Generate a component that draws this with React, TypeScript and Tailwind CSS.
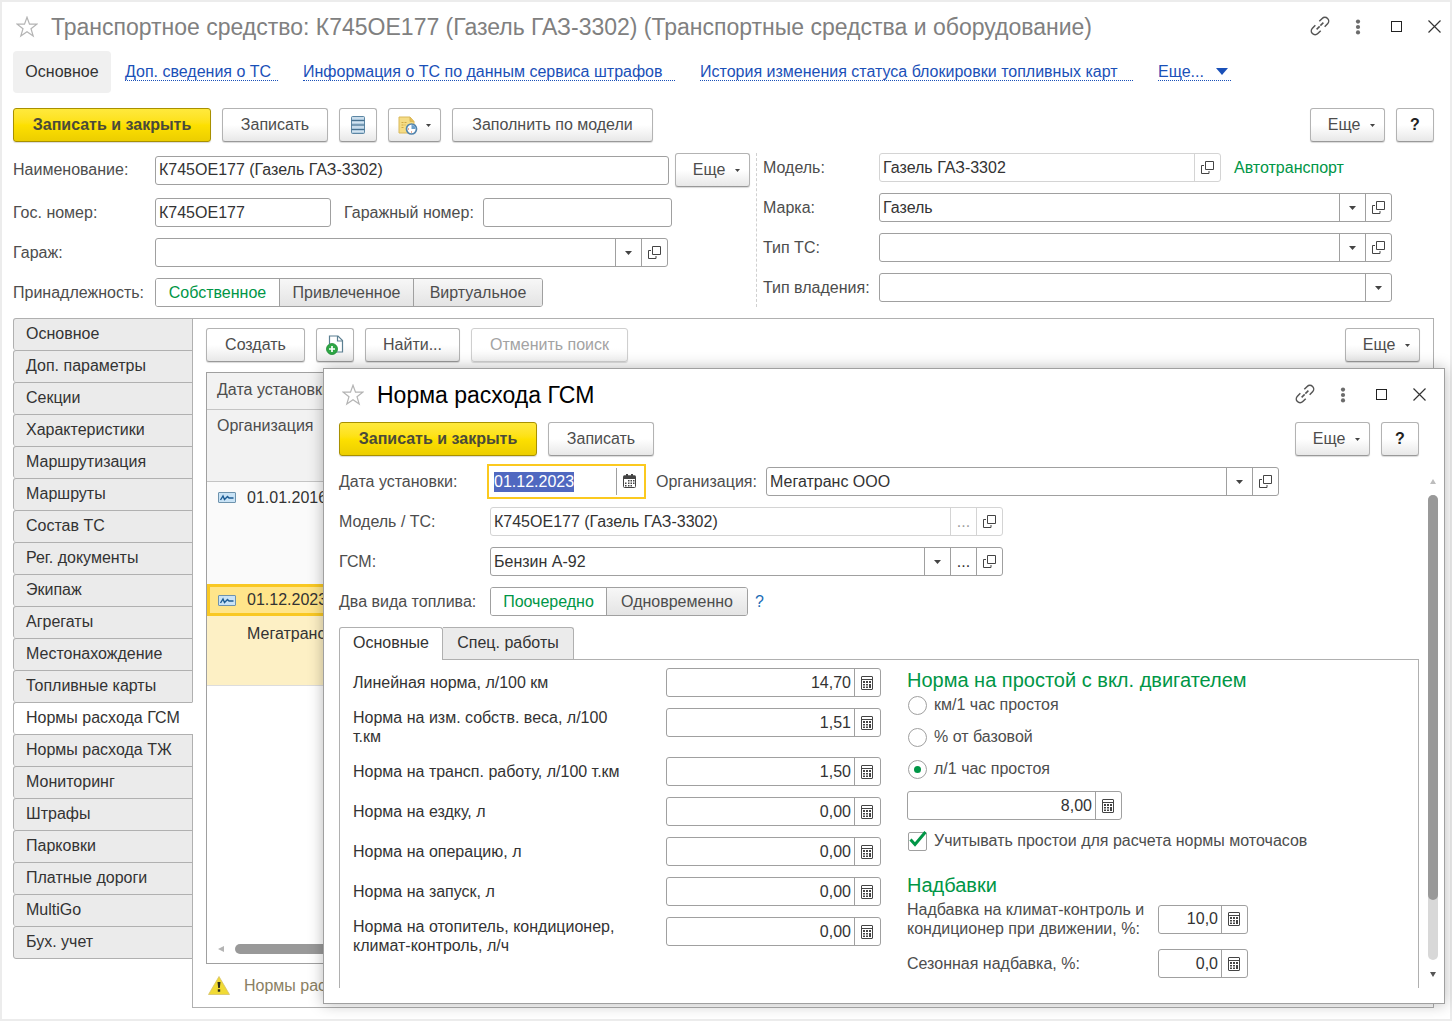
import React from "react";

const sections = [
  "Основное",
  "Доп. параметры",
  "Секции",
  "Характеристики",
  "Маршрутизация",
  "Маршруты",
  "Состав ТС",
  "Рег. документы",
  "Экипаж",
  "Агрегаты",
  "Местонахождение",
  "Топливные карты",
  "Нормы расхода ГСМ",
  "Нормы расхода ТЖ",
  "Мониторинг",
  "Штрафы",
  "Парковки",
  "Платные дороги",
  "MultiGo",
  "Бух. учет",
];

const links = [
  { text: "Доп. сведения о ТС", width: "min-w-[153px]" },
  { text: "Информация о ТС по данным сервиса штрафов", width: "min-w-[372px]" },
  { text: "История изменения статуса блокировки топливных карт", width: "min-w-[433px]" },
];

const norms = [
  { id: "linear", label: "Линейная норма, л/100 км", value: "14,70" },
  { id: "weight", label: "Норма на изм. собств. веса, л/100 т.км", value: "1,51" },
  { id: "transport", label: "Норма на трансп. работу, л/100 т.км", value: "1,50" },
  { id: "trip", label: "Норма на ездку, л", value: "0,00" },
  { id: "operation", label: "Норма на операцию, л", value: "0,00" },
  { id: "start", label: "Норма на запуск, л", value: "0,00" },
  { id: "heater", label: "Норма на отопитель, кондиционер, климат-контроль, л/ч", value: "0,00" },
];

/* ---------- icons ---------- */

const StarIcon = () => (
  <svg width="22" height="22" viewBox="0 0 22 22" fill="none" stroke="#b4b4b4" strokeWidth="1.2">
    <path d="M11 1.2l2.5 7h7.3l-5.8 4.5 2.2 7.4-6.2-4.4-6.2 4.4 2.2-7.4-5.8-4.5h7.3z" />
  </svg>
);

const LinkIcon = () => (
  <svg className="shrink-0" width="24" height="24" viewBox="0 0 24 24" fill="none" stroke="#555" strokeWidth="1.5">
    <g transform="rotate(-45 12 11)">
      <path d="M14.8 7.200h4.100a3.800 3.800 0 0 1 0 7.600h-4.100" />
      <path d="M9.200 7.200H5.100a3.800 3.800 0 0 0 0 7.600h4.100" />
      <path d="M7.200 11h4.300M12.500 11h4.300" />
    </g>
  </svg>
);

const DotsIcon = () => (
  <svg width="6" height="16" viewBox="0 0 6 16" fill="#6b6b6b">
    <circle cx="3" cy="2.6" r="2.1" />
    <circle cx="3" cy="8" r="2.1" />
    <circle cx="3" cy="13.4" r="2.1" />
  </svg>
);

const SquareIcon = () => (
  <svg width="11" height="11" viewBox="0 0 11 11" fill="none" stroke="#222">
    <rect x="0.5" y="0.5" width="10" height="10" />
  </svg>
);

const CloseIcon = () => (
  <svg width="13" height="13" viewBox="0 0 13 13" fill="none" stroke="#333" strokeWidth="1.2">
    <path d="M0.5 0.5l12 12M12.5 0.5l-12 12" />
  </svg>
);

const CaretIcon = () => (
  <svg width="7" height="4" viewBox="0 0 7 4" fill="#444">
    <path d="M0 0h7L3.5 4z" />
  </svg>
);

const OpenIcon = () => (
  <svg width="13" height="13" viewBox="0 0 13 13" fill="none" stroke="#444">
    <path d="M4.500 0.500h8v8h-8zM3 4.500H0.500v8h7.500V10" />
  </svg>
);

const CalcIcon = () => (
  <svg width="12" height="14" viewBox="0 0 12 14">
    <rect x="0.5" y="0.5" width="11" height="13" rx="0.5" fill="none" stroke="#444" />
    <path d="M1 3.500h10" stroke="#444" />
    <path
      d="M2 5h2v2H2zM5 5h2v2H5zM8 5h2v2H8zM2 8h2v1.500H2zM5 8h2v1.500H5zM8 8h2v4H8zM2 10.500h2V12H2zM5 10.500h2V12H5z"
      fill="#444"
    />
  </svg>
);

const CalendarIcon = () => (
  <svg width="13" height="14" viewBox="0 0 13 14">
    <rect x="0.5" y="2" width="12" height="11.500" rx="1" fill="none" stroke="#444" />
    <path d="M0.500 1.500h12V5h-12zM3 0h2v2H3zM8 0h2v2H8z" fill="#444" />
    <path
      d="M5 6h1.500v1.500H5zM7.500 6H9v1.500H7.500zM10 6h1.500v1.500H10zM2 8.500h1.500V10H2zM5 8.500h1.500V10H5zM7.500 8.500H9V10H7.500zM10 8.500h1.500V10H10zM2 11h1.500v1.500H2zM5 11h1.500v1.500H5zM7.500 11H9v1.500H7.500z"
      fill="#444"
    />
  </svg>
);

const ListIcon = () => (
  <svg width="14" height="18" viewBox="0 0 14 18">
    <rect x="0.5" y="0.5" width="13" height="17" rx="1" fill="#a9c6dc" stroke="#5c86a3" />
    <path d="M1 2h12M1 6.500h12M1 11h12M1 15.500h12" stroke="#d3e4f0" strokeWidth="1.500" />
    <path d="M0.500 4.500h13M0.500 9h13M0.500 13.500h13" stroke="#47708e" />
  </svg>
);

const ReportIcon = () => (
  <svg className="shrink-0" width="20" height="19" viewBox="0 0 20 19" fill="none">
    <path d="M1 1h11l4 4.500V17H1z" fill="#f5dc85" stroke="#d9b85a" />
    <path d="M12 1v4.500h4" fill="#e3bd55" stroke="#d9b85a" />
    <path d="M3.500 6.500h5M3.500 9h4M3.500 11.500h3" stroke="#cfa944" strokeDasharray="2 1" />
    <circle cx="13.500" cy="13" r="5" fill="#fff" stroke="#5284ad" strokeWidth="1.700" />
    <path d="M13.500 13V9a4 4 0 0 1 4 4z" fill="#6aa0cc" />
    <path d="M13.500 15.500v1M10 13h1" stroke="#d0552a" />
  </svg>
);

const NewDocIcon = () => (
  <svg width="18" height="20" viewBox="0 0 18 20" fill="none">
    <path d="M3.500 9V1H12l4.500 4.500V17H10" fill="#fff" stroke="#5b7f91" strokeWidth="1.200" />
    <path d="M11.500 1v5h5" stroke="#5b7f91" strokeWidth="1.200" />
    <circle cx="6" cy="14" r="5.500" fill="#2ea745" stroke="#1d8a34" strokeWidth="0.800" />
    <path d="M6 11v6M3 14h6" stroke="#fff" strokeWidth="1.700" />
  </svg>
);

const RecordIcon = () => (
  <svg width="18" height="11" viewBox="0 0 18 11" fill="none">
    <rect x="0.5" y="0.5" width="17" height="10" rx="0.5" fill="#c9e3f6" stroke="#6e93ad" />
    <path d="M2.500 8l2.500-4 1.500 3.500 3-3 1.500 1.500h4.500" stroke="#1c5c94" strokeWidth="1.400" />
  </svg>
);

const WarningIcon = () => (
  <svg width="22" height="19" viewBox="0 0 22 19">
    <path d="M11 0.500l10.500 18H0.500z" fill="#f0da35" stroke="#d5c26a" strokeWidth="0.800" />
    <path d="M9.500 6h3l-0.700 6h-1.600zM9.800 13.300h2.400v2.400H9.800z" fill="#2b2b1c" />
  </svg>
);

/* ---------- controls ---------- */

type ButtonProps = {
  children: React.ReactNode;
  className?: string;
  primary?: boolean;
  disabled?: boolean;
  label?: string;
};

const Button = ({ children, className = "", primary, disabled, label }: ButtonProps) => {
  const look = primary
    ? "border-[#a89000] bg-linear-to-b from-[#ffe93c] via-[#fde000] to-[#ecce00] font-bold text-[#4a4a3a]"
    : disabled
      ? "border-[#cfcfcf] bg-linear-to-b from-white from-60% to-[#f3f3f3] text-[#a3a3a3]"
      : "border-[#b3b3b3] border-b-[#999] bg-linear-to-b from-white from-50% to-[#e8e8e8] text-[#4d4d4d]";
  return (
    <button
      type="button"
      aria-label={label}
      disabled={disabled}
      className={`flex h-[34px] shrink-0 items-center justify-center rounded-[3px] border shadow-[0_1px_1px_rgba(0,0,0,0.15)] ${look} ${className}`}
    >
      {children}
    </button>
  );
};

const MoreButton = () => (
  <Button className="w-[75px] gap-[10px] pl-2">
    Еще
    <svg width="5" height="3" viewBox="0 0 5 3" fill="#444">
      <path d="M0 0h5L2.500 3z" />
    </svg>
  </Button>
);

const HelpButton = () => (
  <Button className="w-[38px]">
    <span className="font-bold text-[#222]">?</span>
  </Button>
);

const WindowButtons = () => (
  <div className="flex items-center gap-[18px]">
    <button type="button" aria-label="Получить ссылку" className="flex w-5 justify-center">
      <LinkIcon />
    </button>
    <button type="button" aria-label="Меню" className="flex w-5 justify-center">
      <DotsIcon />
    </button>
    <button type="button" aria-label="Развернуть" className="flex w-5 justify-center">
      <SquareIcon />
    </button>
    <button type="button" aria-label="Закрыть" className="flex w-5 justify-center">
      <CloseIcon />
    </button>
  </div>
);

type FieldProps = {
  id: string;
  value?: string;
  className?: string;
  muted?: boolean;
  select?: boolean;
  dots?: boolean;
  open?: boolean;
};

// text box or drop-down with the small buttons on its right side
const Field = ({ id, value = "", className = "", muted, select, dots, open }: FieldProps) => {
  const line = muted ? "border-[#d4d4d4]" : "border-[#a0a0a0]";
  const cell = `flex w-[26px] shrink-0 items-center justify-center border-l ${line}`;
  return (
    <div className={`flex h-[29px] min-w-0 rounded-[3px] border bg-white text-[#333] ${line} ${className}`}>
      {select ? (
        <div className="relative min-w-0 flex-1">
          <select id={id} defaultValue={value} className="h-full w-full appearance-none pl-[3px] outline-none">
            <option value={value}>{value}</option>
          </select>
          <span className={`pointer-events-none absolute inset-y-0 right-0 ${cell}`}>
            <CaretIcon />
          </span>
        </div>
      ) : (
        <input
          id={id}
          type="text"
          defaultValue={value}
          readOnly={muted}
          className="min-w-0 flex-1 px-[3px] outline-none"
        />
      )}
      {dots && (
        <button type="button" aria-label="Выбрать" className={`${cell} ${muted ? "text-[#a0a0a0]" : ""}`}>
          ...
        </button>
      )}
      {open && (
        <button type="button" aria-label="Открыть" className={`${cell} pr-px`}>
          <OpenIcon />
        </button>
      )}
    </div>
  );
};

type NumberFieldProps = { id: string; value: string; className: string; label?: string };

const NumberField = ({ id, value, className, label }: NumberFieldProps) => (
  <div className={`flex h-[29px] shrink-0 rounded-[3px] border border-[#a0a0a0] text-[#333] ${className}`}>
    <input
      id={id}
      type="text"
      inputMode="decimal"
      aria-label={label}
      defaultValue={value}
      className="min-w-0 flex-1 px-[3px] text-right outline-none"
    />
    <button
      type="button"
      aria-label="Калькулятор"
      className="flex w-[26px] shrink-0 items-center justify-center border-l border-[#a0a0a0] pr-[2px]"
    >
      <CalcIcon />
    </button>
  </div>
);

const Segmented = ({ items, label }: { items: { text: string; width: string }[]; label: string }) => (
  <div role="group" aria-label={label} className="flex h-[29px] overflow-hidden rounded-[3px] border border-[#a0a0a0]">
    {items.map((item, i) => (
      <button
        key={item.text}
        type="button"
        aria-pressed={i === 0}
        className={`${item.width} ${
          i === 0
            ? "bg-white text-[#009646]"
            : "border-l border-[#a0a0a0] bg-linear-to-b from-[#f7f7f7] to-[#e4e4e4] text-[#4d4d4d]"
        }`}
      >
        {item.text}
      </button>
    ))}
  </div>
);

const Radio = ({ text, checked }: { text: string; checked?: boolean }) => (
  <label className="flex h-[26px] items-center gap-[7px] pl-px">
    <input
      type="radio"
      name="idle"
      defaultChecked={checked}
      className="flex size-[19px] appearance-none items-center justify-center rounded-full border border-[#a0a0a0] bg-white checked:before:size-[7px] checked:before:rounded-full checked:before:bg-[#009646]"
    />
    {text}
  </label>
);

/* ---------- dialog ---------- */

const NormDialog = () => {
  return (
    <div
      role="dialog"
      aria-labelledby="norm-title"
      className="absolute top-[366px] right-[5px] bottom-[15px] left-[321px] z-20 flex flex-col border border-[#a0a0a0] bg-white pb-[15px] shadow-[0_0_14px_rgba(0,0,0,0.28)]"
    >
      <div className="flex h-[53px] items-center justify-between pr-[15px] pb-[2px] pl-[18px]">
        <div className="flex items-center gap-[13px]">
          <StarIcon />
          <h2 id="norm-title" className="text-[23px] text-black">
            Норма расхода ГСМ
          </h2>
        </div>
        <WindowButtons />
      </div>

      <div className="flex gap-[11px] pr-[25px] pl-[15px]">
        <Button primary className="w-[198px]">
          Записать и закрыть
        </Button>
        <Button className="w-[106px]">Записать</Button>
        <div className="ml-auto flex gap-[11px]">
          <MoreButton />
          <HelpButton />
        </div>
      </div>

      <div className="mt-[11px] flex flex-1 gap-[9px] pr-[6px] pl-[15px]">
        <div className="flex min-w-0 flex-1 flex-col">
          <div className="flex flex-col gap-[11px]">
            <div className="flex items-center">
              <label htmlFor="norm-date" className="w-[151px] shrink-0">
                Дата установки:
              </label>
              <div className="flex h-[29px] w-[153px] shrink-0 outline-2 outline-offset-1 outline-[#fbc91f]">
                <input
                  id="norm-date"
                  type="text"
                  defaultValue="01.12.2023"
                  autoFocus
                  onFocus={(e) => e.target.select()}
                  className="min-w-0 flex-1 pl-1 text-[#333] outline-none selection:bg-[#5068c0] selection:text-white"
                />
                <button
                  type="button"
                  aria-label="Календарь"
                  className="my-px flex w-[27px] shrink-0 items-center justify-center border-l border-[#a0a0a0] pr-[2px] pb-[2px]"
                >
                  <CalendarIcon />
                </button>
              </div>
              <label htmlFor="norm-org" className="ml-[13px] w-[110px] shrink-0">
                Организация:
              </label>
              <Field id="norm-org" value="Мегатранс ООО" select open className="w-[513px]" />
            </div>
            <div className="flex items-center">
              <label htmlFor="norm-model" className="w-[151px] shrink-0">
                Модель / ТС:
              </label>
              <Field id="norm-model" value="К745ОЕ177 (Газель ГАЗ-3302)" muted dots open className="w-[513px]" />
            </div>
            <div className="flex items-center">
              <label htmlFor="norm-fuel" className="w-[151px] shrink-0">
                ГСМ:
              </label>
              <Field id="norm-fuel" value="Бензин А-92" select dots open className="w-[513px]" />
            </div>
            <div className="flex items-center">
              <span className="w-[151px] shrink-0">Два вида топлива:</span>
              <Segmented
                label="Два вида топлива"
                items={[
                  { text: "Поочередно", width: "w-[115px]" },
                  { text: "Одновременно", width: "w-[141px]" },
                ]}
              />
              <a href="#fuel-help" className="ml-[7px] text-[#1a6cb5]">
                ?
              </a>
            </div>
          </div>

          <div role="tablist" className="mt-[11px] flex h-8">
            <button
              type="button"
              role="tab"
              aria-selected="true"
              className="relative z-10 -mb-px w-[104px] rounded-t-[3px] border border-b-0 border-[#b0b0b0] bg-white pb-[3px] text-[#333]"
            >
              Основные
            </button>
            <button
              type="button"
              role="tab"
              aria-selected="false"
              className="w-[131px] rounded-tr-[3px] border border-b-0 border-l-0 border-[#b0b0b0] bg-[#ebebeb] pb-[2px] text-[#333]"
            >
              Спец. работы
            </button>
          </div>
          <div className="flex flex-1 gap-[26px] border border-b-0 border-[#b0b0b0] pt-2 pl-[13px]">
            <div className="flex flex-col gap-[11px]">
              {norms.map((norm) => (
                <div key={norm.id} className="flex items-start">
                  <label
                    htmlFor={norm.id}
                    className="flex min-h-[29px] w-[313px] items-center pr-[40px] leading-[19px] text-[#333]"
                  >
                    {norm.label}
                  </label>
                  <NumberField id={norm.id} value={norm.value} className="w-[215px]" />
                </div>
              ))}
            </div>

            <div>
              <h3 className="text-xl leading-6 text-[#009646]">Норма на простой с вкл. двигателем</h3>
              <div className="flex flex-col gap-[6px]">
                <Radio text="км/1 час простоя" />
                <Radio text="% от базовой" />
                <Radio text="л/1 час простоя" checked />
              </div>
              <div className="mt-[9px] flex">
                <NumberField id="idle-norm" label="Норма на простой" value="8,00" className="w-[215px]" />
              </div>
              <label className="mt-[11px] flex h-5 items-center gap-[7px] pl-px">
                <span className="relative flex">
                  <input
                    type="checkbox"
                    defaultChecked
                    className="peer size-[19px] appearance-none rounded-[2px] border border-[#a0a0a0] bg-white"
                  />
                  <svg
                    className="pointer-events-none absolute -top-px left-px hidden peer-checked:block"
                    width="18"
                    height="16"
                    viewBox="0 0 18 16"
                    fill="none"
                    stroke="#009646"
                    strokeWidth="3"
                  >
                    <path d="M1.500 8.500l4.500 5L16.500 1" />
                  </svg>
                </span>
                Учитывать простои для расчета нормы моточасов
              </label>

              <h3 className="mt-[22px] text-xl leading-6 text-[#009646]">Надбавки</h3>
              <div className="mt-[3px] flex items-center">
                <label htmlFor="climate" className="w-[251px] leading-[19px]">
                  Надбавка на климат-контроль и кондиционер при движении, %:
                </label>
                <NumberField id="climate" value="10,0" className="w-[90px]" />
              </div>
              <div className="mt-[11px] flex items-center">
                <label htmlFor="season" className="w-[251px]">
                  Сезонная надбавка, %:
                </label>
                <NumberField id="season" value="0,0" className="w-[90px]" />
              </div>
            </div>
          </div>
        </div>

        <div className="flex w-[10px] flex-col items-center pt-3 pb-[11px]">
          <svg width="6" height="5" viewBox="0 0 6 5" fill="#bdbdbd">
            <path d="M3 0l3 5H0z" />
          </svg>
          <div className="mt-[11px] mb-3 w-full flex-1 rounded-full bg-[#d8d8d8]">
            <div className="h-[87%] rounded-full bg-[#999]" />
          </div>
          <svg width="6" height="5" viewBox="0 0 6 5" fill="#555">
            <path d="M0 0h6L3 5z" />
          </svg>
        </div>
      </div>
    </div>
  );
};

/* ---------- page ---------- */

const App = () => {
  return (
    <div className="relative flex min-h-screen flex-col border-2 border-[#ececec] bg-white pb-[11px] font-['Liberation_Sans',Arial,sans-serif] text-base leading-5 text-[#4d4d4d]">
      <header className="flex h-[49px] items-center justify-between pr-[6px] pl-[14px]">
        <div className="flex items-center gap-[13px]">
          <StarIcon />
          <h1 className="text-[23px] text-[#808080]">
            Транспортное средство: К745ОЕ177 (Газель ГАЗ-3302) (Транспортные средства и оборудование)
          </h1>
        </div>
        <WindowButtons />
      </header>

      <nav className="flex items-center gap-[25px] pl-[11px]">
        <span className="-mr-[11px] flex h-[42px] w-[98px] items-center justify-center rounded-[4px] bg-[#f0f0f0] text-[#333]">
          Основное
        </span>
        {links.map((link) => (
          <a
            key={link.text}
            href="#"
            className={`border-b border-dotted border-[#1a50b8] leading-4 text-[#1a50b8] ${link.width}`}
          >
            {link.text}
          </a>
        ))}
        <a
          href="#"
          className="flex min-w-[73px] items-center gap-3 border-b border-dotted border-[#1a50b8] leading-4 text-[#1a50b8]"
        >
          Еще...
          <svg width="12" height="7" viewBox="0 0 12 7" fill="#1a50b8">
            <path d="M0 0h12L6 7z" />
          </svg>
        </a>
      </nav>

      <div className="mt-[15px] flex gap-[11px] pr-4 pl-[11px]">
        <Button primary className="w-[198px]">
          Записать и закрыть
        </Button>
        <Button className="w-[106px]">Записать</Button>
        <Button className="w-[38px]" label="Список">
          <ListIcon />
        </Button>
        <Button className="w-[53px] gap-2" label="Отчеты">
          <ReportIcon />
          <svg width="5" height="3" viewBox="0 0 5 3" fill="#444">
            <path d="M0 0h5L2.500 3z" />
          </svg>
        </Button>
        <Button className="w-[201px]">Заполнить по модели</Button>
        <div className="ml-auto flex gap-[11px]">
          <MoreButton />
          <HelpButton />
        </div>
      </div>

      <div className="mt-[11px] grid grid-cols-[744fr_677fr] pr-4 pl-[11px]">
        <div className="flex flex-col gap-[11px] border-r border-dashed border-[#d0d0d0] pr-[6px]">
          <div className="flex items-center">
            <label htmlFor="name" className="w-[142px] shrink-0">
              Наименование:
            </label>
            <Field id="name" value="К745ОЕ177 (Газель ГАЗ-3302)" className="mr-[6px] flex-1" />
            <MoreButton />
          </div>
          <div className="flex items-center">
            <label htmlFor="plate" className="w-[142px] shrink-0">
              Гос. номер:
            </label>
            <Field id="plate" value="К745ОЕ177" className="w-[176px]" />
            <label htmlFor="garage-number" className="ml-[13px] w-[139px] shrink-0">
              Гаражный номер:
            </label>
            <Field id="garage-number" className="w-[189px]" />
          </div>
          <div className="flex items-center">
            <label htmlFor="garage" className="w-[142px] shrink-0">
              Гараж:
            </label>
            <Field id="garage" select open className="w-[513px]" />
          </div>
          <div className="flex items-center">
            <span className="w-[142px] shrink-0">Принадлежность:</span>
            <Segmented
              label="Принадлежность"
              items={[
                { text: "Собственное", width: "w-[123px]" },
                { text: "Привлеченное", width: "w-[134px]" },
                { text: "Виртуальное", width: "w-[129px]" },
              ]}
            />
          </div>
        </div>

        <div className="flex flex-col gap-[11px] pr-[42px] pl-[6px]">
          <div className="flex items-center">
            <label htmlFor="model" className="w-[116px] shrink-0">
              Модель:
            </label>
            <Field id="model" value="Газель ГАЗ-3302" muted open className="w-[342px]" />
            <span className="ml-[13px] text-[#009646]">Автотранспорт</span>
          </div>
          <div className="flex items-center">
            <label htmlFor="brand" className="w-[116px] shrink-0">
              Марка:
            </label>
            <Field id="brand" value="Газель" select open className="flex-1" />
          </div>
          <div className="flex items-center">
            <label htmlFor="type" className="w-[116px] shrink-0">
              Тип ТС:
            </label>
            <Field id="type" select open className="flex-1" />
          </div>
          <div className="flex items-center">
            <label htmlFor="ownership" className="w-[116px] shrink-0">
              Тип владения:
            </label>
            <Field id="ownership" select className="flex-1" />
          </div>
        </div>
      </div>

      <div className="mt-[11px] flex flex-1 pr-4 pl-[11px]">
        <div role="tablist" aria-orientation="vertical" className="relative z-10 -mr-px flex w-[180px] shrink-0 flex-col">
          {sections.map((section) => {
            const active = section === "Нормы расхода ГСМ";
            return (
              <button
                key={section}
                type="button"
                role="tab"
                aria-selected={active}
                className={`h-8 rounded-l-[3px] border border-b-0 border-[#b0b0b0] pb-[2px] pl-3 text-left text-[#333] last:h-[33px] last:border-b ${
                  active ? "border-r-white bg-white" : "bg-[#ebebeb]"
                }`}
              >
                {section}
              </button>
            );
          })}
        </div>

        <main className="flex min-w-0 flex-1 flex-col border border-[#b0b0b0] px-[13px] pt-[9px]">
          <div className="flex gap-[11px]">
            <Button className="w-[99px]">Создать</Button>
            <Button className="w-[38px]" label="Создать копированием">
              <NewDocIcon />
            </Button>
            <Button className="w-[95px]">Найти...</Button>
            <Button disabled className="w-[157px]">
              Отменить поиск
            </Button>
            <div className="ml-auto">
              <MoreButton />
            </div>
          </div>

          <div className="mt-[10px] flex flex-1 flex-col justify-between border border-[#a0a0a0]">
            <table className="w-full border-collapse text-left">
              <thead className="bg-[#f2f2f2]">
                <tr className="h-9 border-b border-[#c4c4c4]">
                  <th className="pb-[2px] pl-[10px] font-normal">Дата установки</th>
                </tr>
                <tr className="h-[72px] border-b border-[#c4c4c4] align-top">
                  <th className="pt-[6px] pl-[10px] font-normal">Организация</th>
                </tr>
              </thead>
              <tbody className="text-[#333]">
                <tr className="h-[103px] border-b border-[#ddd] bg-[#fafafa] align-top">
                  <td className="pt-[6px] pl-[11px]">
                    <div className="flex items-center gap-[11px]">
                      <RecordIcon />
                      01.01.2016
                    </div>
                  </td>
                </tr>
                <tr className="h-8 bg-[#ffe58a] outline-3 -outline-offset-3 outline-[#f9c823]">
                  <td className="pl-[11px]">
                    <div className="flex items-center gap-[11px]">
                      <RecordIcon />
                      01.12.2023
                    </div>
                  </td>
                </tr>
                <tr className="h-[69px] border-b border-[#ddd] bg-[#fdf0c5] align-top">
                  <td className="pt-2 pl-10">Мегатранс ООО</td>
                </tr>
              </tbody>
            </table>
            <div className="mb-[9px] flex items-center gap-[11px] pr-[11px] pl-[11px]">
              <svg width="6" height="6" viewBox="0 0 6 6" fill="#b4b4b4">
                <path d="M6 0v6L0 3z" />
              </svg>
              <div className="h-[10px] w-2/3 rounded-full bg-[#999]" />
            </div>
          </div>

          <div className="flex h-[43px] items-center gap-[14px] pl-[2px] text-[#8a8063]">
            <WarningIcon />
            Нормы расхода
          </div>
        </main>
      </div>

      <NormDialog />
    </div>
  );
};

export default App;
